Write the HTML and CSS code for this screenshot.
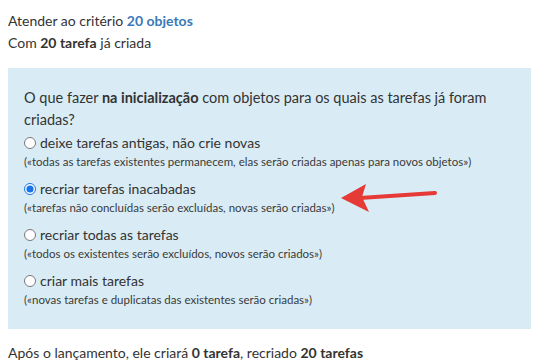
FILE: index.html
```html
<!DOCTYPE html>
<html lang="pt">

<head>
    <meta charset="UTF-8">
    <meta name="viewport" content="width=device-width, initial-scale=1.0">
    <title>Recriar tarefas</title>
    <link rel="stylesheet" href="styles.css">
</head>

<body>
    <div class="summary">
        <p>Atender ao critério <b class="accent">20 objetos</b></p>
        <p>Com <b>20 tarefa</b> já criada</p>
    </div>

    <div class="panel">
        <p class="question">O que fazer <b>na inicialização</b> com objetos para os quais as tarefas já foram criadas?</p>

        <div class="option">
            <label><input type="radio" name="mode"> deixe tarefas antigas, não crie novas</label>
            <small>(«todas as tarefas existentes permanecem, elas serão criadas apenas para novos objetos»)</small>
        </div>

        <div class="option">
            <label><input type="radio" name="mode" checked> recriar tarefas inacabadas</label>
            <small>(«tarefas não concluídas serão excluídas, novas serão criadas»)</small>
        </div>

        <div class="option">
            <label><input type="radio" name="mode"> recriar todas as tarefas</label>
            <small>(«todos os existentes serão excluídos, novos serão criados»)</small>
        </div>

        <div class="option">
            <label><input type="radio" name="mode"> criar mais tarefas</label>
            <small>(«novas tarefas e duplicatas das existentes serão criadas»)</small>
        </div>

        <svg class="pointer" width="100" height="36" viewBox="0 0 100 36">
            <line x1="22" y1="18" x2="97" y2="13" stroke="#e53a35" stroke-width="4" stroke-linecap="round" />
            <polygon points="3,18 28,4 24,17 31,32" fill="#e53a35" />
        </svg>
    </div>

    <p class="result">Após o lançamento, ele criará <b>0 tarefa</b>, recriado <b>20 tarefas</b></p>
</body>

</html>
```

FILE: styles.css
```css
body {
    font-family: Lato, "Liberation Sans", sans-serif;
    font-size: 14px;
    line-height: 22px;
    color: #333;
    background-color: #fff;
    margin: 10px 14px 0 8px;
}

p {
    margin: 0;
}

b {
    font-weight: bold;
}

.accent {
    color: #3b78b8;
}

.summary {
    margin-bottom: 14px;
}

.panel {
    position: relative;
    background-color: #d9ecf5;
    padding: 19px 16px 20px;
}

.question {
    font-size: 14.5px;
    margin-bottom: 2px;
}

.option {
    margin-bottom: 8px;
}

.option:last-of-type {
    margin-bottom: 0;
}

.option label {
    display: flex;
    align-items: center;
    line-height: 20px;
    cursor: pointer;
}

.option input {
    width: 12px;
    height: 12px;
    margin: 0 4px 0 0;
    accent-color: #1a73e8;
}

.option small {
    display: block;
    font-size: 11.5px;
    line-height: 18px;
    color: #3a3a3a;
}

/* red arrow drawn over the panel */
.pointer {
    position: absolute;
    left: 330px;
    top: 112px;
}

.result {
    margin-top: 13px;
}
```
